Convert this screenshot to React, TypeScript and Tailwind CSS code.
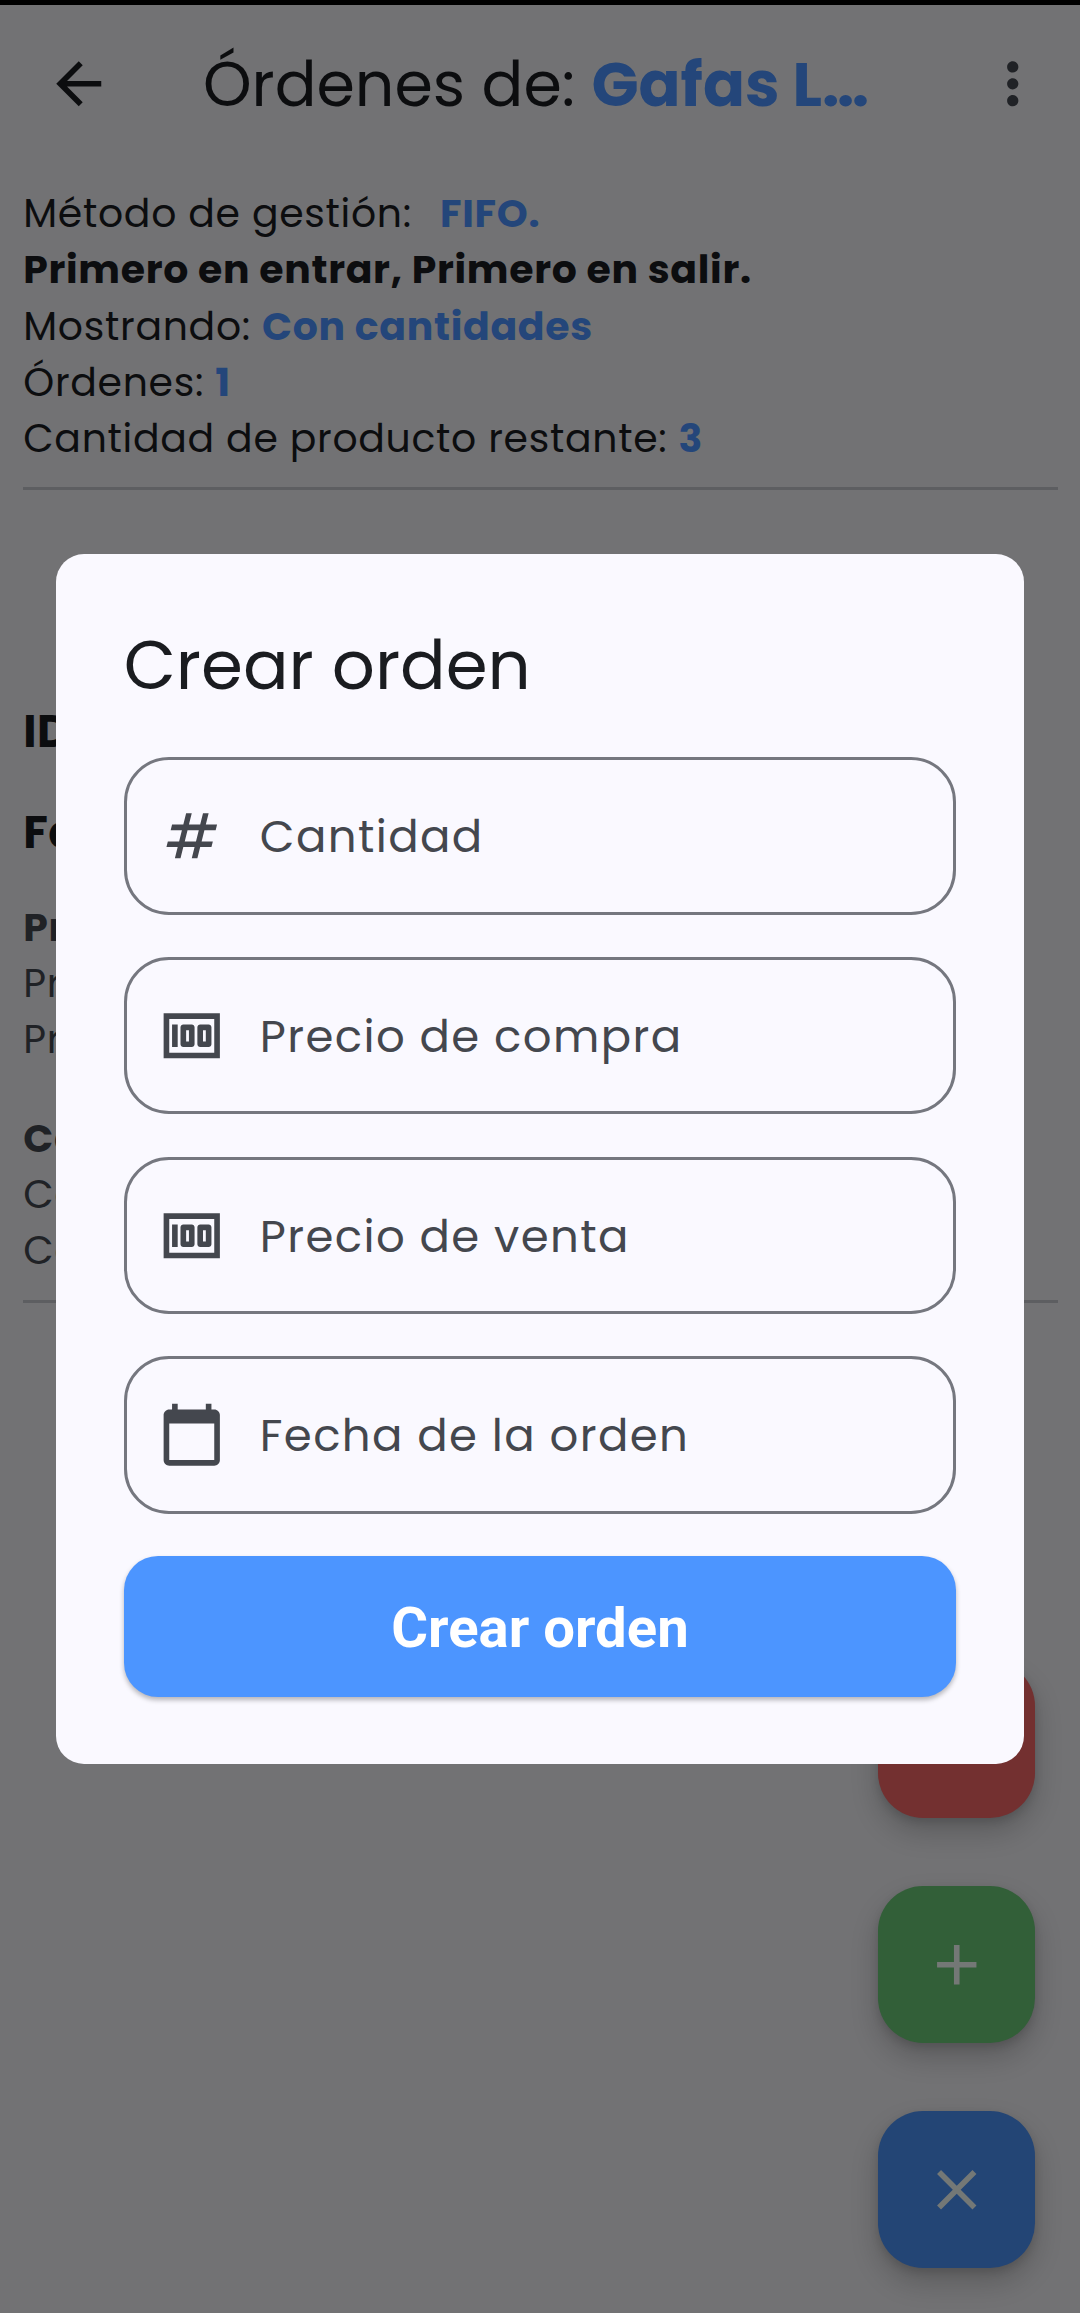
import type { ReactNode } from "react";
import { MdAdd, MdArrowBack, MdCalendarToday, MdClose, MdMoney, MdMoreVert, MdNumbers } from "react-icons/md";

function Line({ children }: { children: ReactNode }) {
  return <p className="h-[56.25px] whitespace-pre leading-[56.25px]">{children}</p>;
}

function Accent({ children }: { children: ReactNode }) {
  return <b className="text-[#24467a]">{children}</b>;
}

function Field({ icon, label }: { icon: ReactNode; label: string }) {
  return (
    <div className="flex h-[157.5px] items-center rounded-[45px] border-[3px] border-[#75777f] pl-[31px] text-[#44474e]">
      {icon}
      <span className="pt-[2px] pl-[34.5px] text-[45px] tracking-[1.4px] whitespace-nowrap">{label}</span>
    </div>
  );
}

export default function App() {
  return (
    <div className="relative h-[2313px] w-[1080px] overflow-hidden bg-[#727274] font-['Poppins','Inter',sans-serif] text-[#0c0d0f]">
      <div className="h-[5px] bg-black" />
      <header className="flex h-[158px] items-center">
        <MdArrowBack className="ml-[45px] size-[67.5px]" />
        <h1 className="ml-[90.5px] w-[700px] pt-[2px] text-[61.875px] whitespace-pre">
          {"Órdenes de: "}<Accent>Gafas L…</Accent>
        </h1>
        <MdMoreVert className="mr-[34px] ml-auto size-[67.5px] text-[#202226]" />
      </header>

      <section className="mx-[22.5px] border-b-[3px] border-[#5d5e61] pt-[23px] pb-[19.5px] pl-[0.75px] text-[39.375px] tracking-[0.7px]">
        <Line>{"Método de gestión: "}<span className="ml-[17px]"><Accent>FIFO.</Accent></span></Line>
        <Line><b>Primero en entrar, Primero en salir.</b></Line>
        <Line>{"Mostrando: "}<Accent>Con cantidades</Accent></Line>
        <Line>{"Órdenes: "}<Accent>1</Accent></Line>
        <Line>{"Cantidad de producto restante: "}<Accent>3</Accent></Line>
      </section>

      <section className="mx-[22.5px] mt-[210px] border-b-[3px] border-[#5d5e61] pb-[21px] pl-[0.75px] text-[39.375px] tracking-[0.7px] text-[#202226]">
        <div className="flex flex-col gap-[37px] text-[45px] leading-[64px] font-bold tracking-[0.4px] text-[#0c0d0f]">
          <p>ID</p>
          <p>Fecha</p>
        </div>
        <div className="mt-[35px]">
          <Line><b>Precios</b></Line>
          <Line>Precio</Line>
          <Line>Precio</Line>
        </div>
        <div className="mt-[42px]">
          <Line><b>Cantidad</b></Line>
          <Line>Cantidad</Line>
          <Line>Cantidad</Line>
        </div>
      </section>

      <div className="absolute right-[45px] bottom-[45px] flex flex-col gap-[67.5px] text-[#747876]">
        <div className="size-[157.5px] rounded-[45px] bg-[#733030] shadow-[0_14px_28px_rgba(0,0,0,0.2),0_4px_8px_rgba(0,0,0,0.12)]" />
        <button className="flex size-[157.5px] items-center justify-center rounded-[45px] bg-[#325f38] shadow-[0_14px_28px_rgba(0,0,0,0.2),0_4px_8px_rgba(0,0,0,0.12)]"><MdAdd className="size-[67.5px]" /></button>
        <button className="flex size-[157.5px] items-center justify-center rounded-[45px] bg-[#234575] shadow-[0_14px_28px_rgba(0,0,0,0.2),0_4px_8px_rgba(0,0,0,0.12)]"><MdClose className="size-[67.5px]" /></button>
      </div>

      <div className="absolute top-[554px] left-[56.25px] flex h-[1210px] w-[967.5px] flex-col rounded-[28px] bg-[#faf9ff] px-[67.5px] pt-[67.5px]">
        <h2 className="h-[135.7px] text-[67.5px] leading-[88px] whitespace-nowrap text-[#1a1c20]">Crear orden</h2>
        <div className="flex flex-col gap-[42.2px]">
          <Field icon={<MdNumbers className="size-[67.5px]" />} label="Cantidad" />
          <Field icon={<MdMoney className="size-[67.5px]" />} label="Precio de compra" />
          <Field icon={<MdMoney className="size-[67.5px]" />} label="Precio de venta" />
          <Field icon={<MdCalendarToday className="size-[67.5px]" />} label="Fecha de la orden" />
          <button className="h-[140.6px] rounded-[34px] bg-[#4c95ff] pt-[3px] font-['Roboto',sans-serif] text-[56.25px] font-bold text-white shadow-[0_3px_5px_rgba(0,0,0,0.28)]">Crear orden</button>
        </div>
      </div>
    </div>
  );
}
